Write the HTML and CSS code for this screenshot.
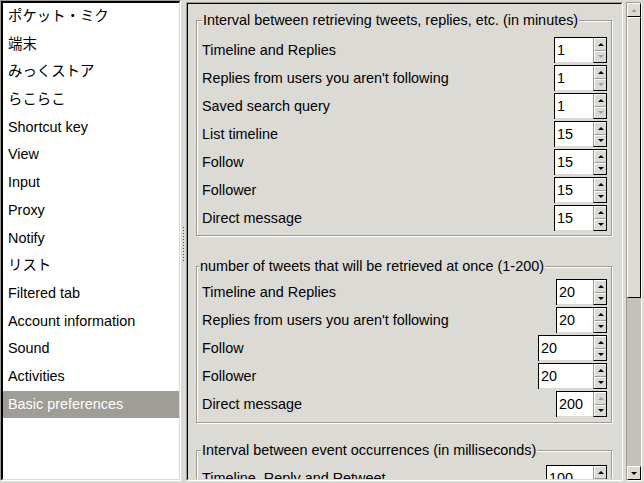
FILE: index.html
```html
<!DOCTYPE html>
<html>
<head>
<meta charset="utf-8">
<link rel="stylesheet" href="styles.css">
</head>
<body>
<div class="app">
  <div class="list">
    <ul class="list-items">
      <li class="item">ポケット・ミク</li>
      <li class="item">端末</li>
      <li class="item">みっくストア</li>
      <li class="item">らこらこ</li>
      <li class="item">Shortcut key</li>
      <li class="item">View</li>
      <li class="item">Input</li>
      <li class="item">Proxy</li>
      <li class="item">Notify</li>
      <li class="item">リスト</li>
      <li class="item">Filtered tab</li>
      <li class="item">Account information</li>
      <li class="item">Sound</li>
      <li class="item">Activities</li>
      <li class="item sel">Basic preferences</li>
    </ul>
  </div>
  <div class="handle"><span class="grip"></span></div>
  <div class="panel">
    <div class="viewport">
      <div class="viewport-inner">
        <fieldset class="group g1">
          <legend>Interval between retrieving tweets, replies, etc. (in minutes)</legend>
          <div class="rows">
            <div class="row"><span>Timeline and Replies</span><div class="spin spin-a"><span class="spin-val">1</span><span class="spin-btns"><span class="spin-up"><i class="arr up"></i></span><span class="spin-down"><i class="arr dn off"></i></span></span></div></div>
            <div class="row"><span>Replies from users you aren't following</span><div class="spin spin-a"><span class="spin-val">1</span><span class="spin-btns"><span class="spin-up"><i class="arr up"></i></span><span class="spin-down"><i class="arr dn off"></i></span></span></div></div>
            <div class="row"><span>Saved search query</span><div class="spin spin-a"><span class="spin-val">1</span><span class="spin-btns"><span class="spin-up"><i class="arr up"></i></span><span class="spin-down"><i class="arr dn off"></i></span></span></div></div>
            <div class="row"><span>List timeline</span><div class="spin spin-a"><span class="spin-val">15</span><span class="spin-btns"><span class="spin-up"><i class="arr up"></i></span><span class="spin-down"><i class="arr dn"></i></span></span></div></div>
            <div class="row"><span>Follow</span><div class="spin spin-a"><span class="spin-val">15</span><span class="spin-btns"><span class="spin-up"><i class="arr up"></i></span><span class="spin-down"><i class="arr dn"></i></span></span></div></div>
            <div class="row"><span>Follower</span><div class="spin spin-a"><span class="spin-val">15</span><span class="spin-btns"><span class="spin-up"><i class="arr up"></i></span><span class="spin-down"><i class="arr dn"></i></span></span></div></div>
            <div class="row"><span>Direct message</span><div class="spin spin-a"><span class="spin-val">15</span><span class="spin-btns"><span class="spin-up"><i class="arr up"></i></span><span class="spin-down"><i class="arr dn"></i></span></span></div></div>
          </div>
        </fieldset>
        <fieldset class="group g2">
          <legend>number of tweets that will be retrieved at once (1-200)</legend>
          <div class="rows">
            <div class="row"><span>Timeline and Replies</span><div class="spin spin-b"><span class="spin-val">20</span><span class="spin-btns"><span class="spin-up"><i class="arr up"></i></span><span class="spin-down"><i class="arr dn"></i></span></span></div></div>
            <div class="row"><span>Replies from users you aren't following</span><div class="spin spin-b"><span class="spin-val">20</span><span class="spin-btns"><span class="spin-up"><i class="arr up"></i></span><span class="spin-down"><i class="arr dn"></i></span></span></div></div>
            <div class="row"><span>Follow</span><div class="spin spin-c"><span class="spin-val">20</span><span class="spin-btns"><span class="spin-up"><i class="arr up"></i></span><span class="spin-down"><i class="arr dn"></i></span></span></div></div>
            <div class="row"><span>Follower</span><div class="spin spin-c"><span class="spin-val">20</span><span class="spin-btns"><span class="spin-up"><i class="arr up"></i></span><span class="spin-down"><i class="arr dn"></i></span></span></div></div>
            <div class="row"><span>Direct message</span><div class="spin spin-b"><span class="spin-val">200</span><span class="spin-btns"><span class="spin-up"><i class="arr up off"></i></span><span class="spin-down"><i class="arr dn"></i></span></span></div></div>
          </div>
        </fieldset>
        <fieldset class="group g3">
          <legend>Interval between event occurrences (in milliseconds)</legend>
          <div class="rows">
            <div class="row"><span>Timeline, Reply and Retweet</span><div class="spin spin-d"><span class="spin-val">100</span><span class="spin-btns"><span class="spin-up"><i class="arr up"></i></span><span class="spin-down"><i class="arr dn"></i></span></span></div></div>
          </div>
        </fieldset>
      </div>
    </div>
    <div class="scrollbar">
      <span class="sb-btn"><i class="arr up off"></i></span>
      <span class="sb-thumb"></span>
      <span class="sb-trough"></span>
      <span class="sb-btn"><i class="arr dn"></i></span>
    </div>
  </div>
</div>
</body>
</html>
```

FILE: styles.css
```css
html, body {
  margin: 0;
  padding: 0;
}
body {
  width: 644px;
  height: 483px;
  overflow: hidden;
  background: #dcdad5;
  color: #000;
  font-family: "Liberation Sans", "Noto Sans CJK JP", sans-serif;
  font-size: 14.4px;
}
.app {
  display: flex;
  height: 483px;
}

/* left list */
.list {
  flex: none;
  width: 181px;
  height: 481px;
  box-sizing: border-box;
  border: 1px solid;
  border-color: #9d9a94 #fff #fff #9d9a94;
}
.list-items {
  list-style: none;
  margin: 0;
  padding: 0;
  height: 100%;
  box-sizing: border-box;
  border-style: solid;
  border-width: 2px 1px 1px 2px;
  border-color: #000 #dcdad5 #dcdad5 #000;
  background: #fff;
  overflow: hidden;
}
.item {
  height: 27.7px;
  line-height: 27.7px;
  padding-left: 5px;
  white-space: nowrap;
}
.item.sel {
  background: #9f9d98;
  color: #fff;
}

/* paned handle */
.handle {
  flex: none;
  width: 5px;
  display: flex;
  align-items: center;
  justify-content: center;
}
.grip {
  width: 1px;
  height: 34px;
  margin-top: 4px;
  background: repeating-linear-gradient(to bottom, #55534f 0 1px, transparent 1px 3px);
}

/* right panel */
.panel {
  flex: 1;
  display: flex;
  margin-top: 2px;
  height: 479px;
}
.viewport {
  flex: none;
  width: 437px;
  box-sizing: border-box;
  border: 1px solid;
  border-color: #9d9a94 #fff #fff #9d9a94;
}
.viewport-inner {
  height: 100%;
  box-sizing: border-box;
  border: 1px solid;
  border-color: #000 #dcdad5 #dcdad5 #000;
  padding: 8px 9px 0 8px;
  overflow: hidden;
}

/* groups */
.group {
  margin: 0;
  padding: 9px 4px 4px 5px;
  border: 1px solid #9d9a94;
  box-shadow: inset 1px 1px 0 #fff, 1px 1px 0 #fff;
  min-width: 0;
}
.group legend {
  padding: 0 1px;
  line-height: 16px;
  background: #dcdad5;
  white-space: nowrap;
}
.g2 {
  margin-top: 22px;
  padding-top: 5px;
  padding-bottom: 5px;
}
.g2 legend {
  margin-left: -3px;
}
.g3 {
  margin-top: 19px;
  padding-top: 7px;
}
.g3 legend {
  margin-left: -1px;
}
.rows {
  display: flex;
  flex-direction: column;
  gap: 2px;
}
.row {
  display: flex;
  align-items: center;
  justify-content: space-between;
  height: 26px;
  white-space: nowrap;
}

/* spin buttons */
.spin {
  flex: none;
  display: flex;
  height: 26px;
  box-sizing: border-box;
  border-top: 1px solid #000;
  border-left: 1px solid #000;
  background: #fff;
}
.spin-a { width: 53px; }
.spin-b { width: 51px; }
.spin-c { width: 69px; }
.spin-d { width: 61px; }
.spin-val {
  flex: 1;
  line-height: 24px;
  padding-left: 2px;
  border-bottom: 1px solid #dcdad5;
}
.spin-btns {
  flex: none;
  width: 14px;
  box-sizing: border-box;
  display: flex;
  flex-direction: column;
  border-left: 1px solid #9d9a94;
  border-right: 1px solid #000;
  border-bottom: 1px solid #000;
}
.spin-up, .spin-down {
  flex: 1;
  display: flex;
  align-items: center;
  justify-content: center;
  background: #dcdad5;
  border-top: 1px solid #fff;
  border-left: 1px solid #fff;
}
.spin-up {
  border-bottom: 1px solid #9d9a94;
}
.arr {
  display: block;
  width: 0;
  height: 0;
  border-left: 3px solid transparent;
  border-right: 3px solid transparent;
}
.arr.up {
  border-bottom: 3px solid #000;
}
.arr.dn {
  border-top: 3px solid #000;
}
.arr.up.off {
  border-bottom-color: #a3a19c;
}
.arr.dn.off {
  border-top-color: #a3a19c;
}

/* scrollbar */
.scrollbar {
  flex: none;
  width: 16px;
  margin-left: 3px;
  box-sizing: border-box;
  border: 1px solid;
  border-color: #9d9a94 #fff #fff #9d9a94;
  display: flex;
  flex-direction: column;
  background: #c4c1bb;
}
.sb-btn {
  flex: none;
  height: 14px;
  box-sizing: border-box;
  background: #dcdad5;
  border: 1px solid;
  border-color: #fff #000 #000 #fff;
  display: flex;
  align-items: center;
  justify-content: center;
}
.sb-thumb {
  flex: none;
  height: 281px;
  box-sizing: border-box;
  background: #dcdad5;
  border: 1px solid;
  border-color: #fff #000 #000 #fff;
}
.sb-trough {
  flex: 1;
}
```
